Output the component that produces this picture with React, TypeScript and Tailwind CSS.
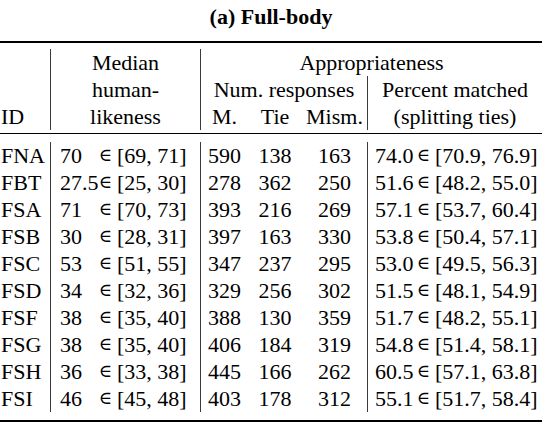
const rows = [
  ["FNA", "70", "[69, 71]", "590", "138", "163", "74.0", "[70.9, 76.9]"],
  ["FBT", "27.5", "[25, 30]", "278", "362", "250", "51.6", "[48.2, 55.0]"],
  ["FSA", "71", "[70, 73]", "393", "216", "269", "57.1", "[53.7, 60.4]"],
  ["FSB", "30", "[28, 31]", "397", "163", "330", "53.8", "[50.4, 57.1]"],
  ["FSC", "53", "[51, 55]", "347", "237", "295", "53.0", "[49.5, 56.3]"],
  ["FSD", "34", "[32, 36]", "329", "256", "302", "51.5", "[48.1, 54.9]"],
  ["FSF", "38", "[35, 40]", "388", "130", "359", "51.7", "[48.2, 55.1]"],
  ["FSG", "38", "[35, 40]", "406", "184", "319", "54.8", "[51.4, 58.1]"],
  ["FSH", "36", "[33, 38]", "445", "166", "262", "60.5", "[57.1, 63.8]"],
  ["FSI", "46", "[45, 48]", "403", "178", "312", "55.1", "[51.7, 58.4]"],
];

const cols = "grid grid-cols-[51px_150px_47px_54px_65px_175px]";
const vline = "border-[#3a3a3a]";
const elem = "w-[21px] shrink-0 flex justify-center pr-[2px] text-[18px]";

export default function App() {
  return (
    <div className="w-[542px] h-[430px] bg-white text-black text-[22px] leading-[27px] font-['Liberation_Serif','DejaVu_Serif',serif]">
      {/* caption */}
      <div className="h-[41px] pt-[3px] text-center font-bold">(a) Full-body</div>

      <div className="border-t-2 border-black" />

      {/* header */}
      <div className={`${cols} grid-rows-[27px_27px_27px] mt-[6px]`}>
        <div className={`row-span-3 row-start-1 col-start-1 flex items-end pl-[1px] border-r ${vline}`}>ID</div>
        <div className={`row-span-3 row-start-1 col-start-2 flex flex-col text-center border-r ${vline}`}>
          <span>Median</span>
          <span>human-</span>
          <span>likeness</span>
        </div>
        <div className="row-start-1 col-start-3 col-span-4 text-center">Appropriateness</div>
        <div className="row-start-2 col-start-3 col-span-3 text-center">Num. responses</div>
        <div className={`row-start-2 col-start-6 text-center border-l ${vline}`}>Percent matched</div>
        <div className="row-start-3 col-start-3 text-center">M.</div>
        <div className="row-start-3 col-start-4 text-center">Tie</div>
        <div className="row-start-3 col-start-5 text-center">Mism.</div>
        <div className={`row-start-3 col-start-6 text-center border-l ${vline}`}>(splitting ties)</div>
      </div>

      <div className="mt-[3px] border-t border-black" />

      {/* body */}
      <div className="mt-[8px]">
        {rows.map((r) => (
          <div key={r[0]} className={`${cols} h-[27px]`}>
            <div className={`pl-[1px] border-r ${vline}`}>{r[0]}</div>
            <div className={`flex items-center pl-[9px] border-r ${vline}`}>
              <span className="w-[36px] shrink-0">{r[1]}</span>
              <span className={elem}>∈</span>
              <span className="whitespace-pre">{r[2]}</span>
            </div>
            <div className="text-center">{r[3]}</div>
            <div className="text-center">{r[4]}</div>
            <div className="text-center">{r[5]}</div>
            <div className={`flex items-center pl-[7px] border-l ${vline}`}>
              <span className="w-[39px] shrink-0">{r[6]}</span>
              <span className={elem}>∈</span>
              <span className="whitespace-pre">{r[7]}</span>
            </div>
          </div>
        ))}
      </div>

      <div className="mt-[8px] border-t-2 border-black" />
    </div>
  );
}
